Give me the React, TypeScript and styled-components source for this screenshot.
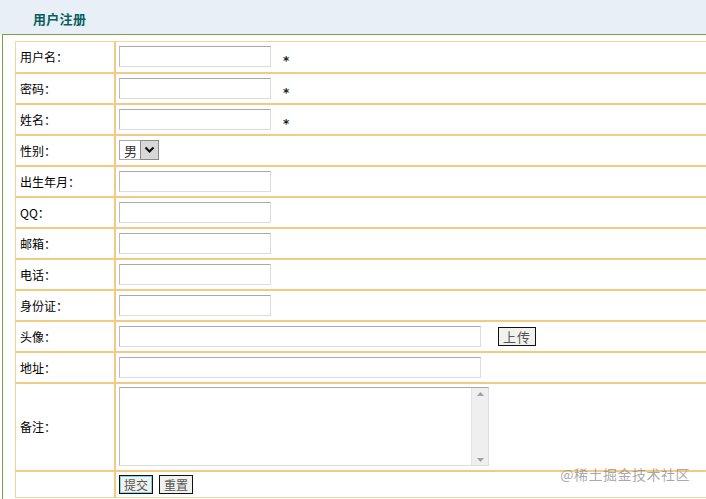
import React from 'react';
import styled, { createGlobalStyle } from 'styled-components';

const GlobalStyle = createGlobalStyle`
  html, body {
    margin: 0;
    padding: 0;
    background: #ffffff;
    overflow: hidden;
  }
  body {
    font-family: "Noto Sans CJK SC", "DejaVu Sans", sans-serif;
    font-size: 12px;
    color: #000;
  }
`;

const Page = styled.div`
  position: relative;
  width: 706px;
  height: 499px;
  overflow: hidden;
`;

const Header = styled.div`
  height: 34px;
  background: #e8eff7;
  display: flex;
  align-items: center;
  padding-left: 33px;
  box-sizing: border-box;
  padding-top: 2px;
`;

const Title = styled.h1`
  margin: 0;
  font-size: 13px;
  font-weight: bold;
  color: #0b5f5c;
  letter-spacing: 0.3px;
`;

const Panel = styled.div`
  margin-left: 2px;
  border-top: 1px solid #7d9f45;
  border-left: 1px solid #7d9f45;
  padding: 6px 0 0 12px;
  height: 470px;
`;

const FormTable = styled.table`
  width: 720px;
  border-collapse: collapse;
  border: 1px solid #f1d59c;
`;

const Row = styled.tr<{ h?: number }>`
  height: ${(p) => p.h ?? 31}px;
  border-bottom: 2px solid #f4c982;
  &:last-child {
    border-bottom: none;
  }
`;

const Label = styled.td`
  width: 94px;
  padding: 0 0 0 4px;
  border-right: 2px solid #f4c982;
  vertical-align: middle;
  font-size: 12px;
  white-space: nowrap;
`;

const Field = styled.td`
  padding: 0 0 0 3px;
  vertical-align: middle;
`;

const Line = styled.div`
  display: flex;
  align-items: center;
`;

const TextBox = styled.div<{ w?: number }>`
  box-sizing: border-box;
  width: ${(p) => p.w ?? 152}px;
  height: 21px;
  border: 1px solid #dcdcdc;
  border-top-color: #a9a9a9;
  border-left-color: #bcbcbc;
  background: #fff;
`;

const Star = styled.span`
  margin-left: 12px;
  margin-top: 9px;
  font-family: "DejaVu Sans", sans-serif;
  font-size: 12px;
  font-weight: bold;
  color: #222;
`;

const SelectBox = styled.div`
  display: flex;
  align-items: stretch;
  height: 20px;
  border: 1px solid #a5acb2;
  box-sizing: border-box;
`;

const SelectValue = styled.span`
  display: flex;
  align-items: center;
  padding: 0 3px 0 4px;
  font-size: 13px;
  color: #333;
  background: #fff;
`;

const SelectArrow = styled.span`
  width: 17px;
  display: flex;
  align-items: center;
  justify-content: center;
  background: #d8d8d8;
  border: 1px solid #8a8a8a;
  margin: -1px -1px -1px 0;
`;

const PlainButton = styled.button<{ focused?: boolean }>`
  box-sizing: border-box;
  height: 19px;
  padding: 0 4px;
  margin-right: 6px;
  font-family: "Noto Sans CJK SC", sans-serif;
  font-size: 12px;
  line-height: 15px;
  color: #555;
  background: #f1f1ee;
  border: 1px solid #111;
  box-shadow: ${(p) => (p.focused ? 'inset 0 0 0 1px #7fd6e8' : 'none')};
`;

const UploadButton = styled(PlainButton)`
  margin-left: 17px;
  font-size: 13px;
  letter-spacing: 1px;
`;

const Memo = styled.div`
  display: flex;
  box-sizing: border-box;
  width: 370px;
  height: 79px;
  border: 1px solid #dcdcdc;
  border-top-color: #a9a9a9;
  border-left-color: #bcbcbc;
  background: #fff;
`;

const MemoText = styled.div`
  flex: 1;
`;

const ScrollTrack = styled.div`
  width: 16px;
  background: #efefef;
  border-left: 1px solid #e2e2e2;
  display: flex;
  flex-direction: column;
  justify-content: space-between;
  align-items: center;
  padding: 4px 0 3px;
`;

const Watermark = styled.div`
  position: absolute;
  right: 16px;
  bottom: 15px;
  font-family: "Noto Sans CJK SC", sans-serif;
  font-size: 14px;
  color: rgba(140, 140, 140, 0.75);
  letter-spacing: 0.5px;
`;

const Chevron = () => (
  <svg width="11" height="8" viewBox="0 0 11 8">
    <path d="M1.5 1.5 L5.5 5.5 L9.5 1.5" fill="none" stroke="#111" strokeWidth="2.2" />
  </svg>
);

const Tri = ({ up }: { up?: boolean }) => (
  <svg width="7" height="4" viewBox="0 0 7 4">
    <path d={up ? 'M0 4 L3.5 0 L7 4 Z' : 'M0 0 L3.5 4 L7 0 Z'} fill="#a0a0a0" />
  </svg>
);

const simple = ['用户名：', '密码：', '姓名：'];

const plain = ['出生年月：', 'QQ：', '邮箱：', '电话：', '身份证：'];

export default function App() {
  return (
    <Page>
      <GlobalStyle />
      <Header>
        <Title>用户注册</Title>
      </Header>
      <Panel>
        <FormTable>
          <tbody>
            {simple.map((l) => (
              <Row key={l}>
                <Label>{l}</Label>
                <Field>
                  <Line>
                    <TextBox />
                    <Star>*</Star>
                  </Line>
                </Field>
              </Row>
            ))}
            <Row>
              <Label>性别：</Label>
              <Field>
                <Line>
                  <SelectBox>
                    <SelectValue>男</SelectValue>
                    <SelectArrow>
                      <Chevron />
                    </SelectArrow>
                  </SelectBox>
                </Line>
              </Field>
            </Row>
            {plain.map((l) => (
              <Row key={l}>
                <Label>{l}</Label>
                <Field>
                  <TextBox />
                </Field>
              </Row>
            ))}
            <Row>
              <Label>头像：</Label>
              <Field>
                <Line>
                  <TextBox w={362} />
                  <UploadButton>上传</UploadButton>
                </Line>
              </Field>
            </Row>
            <Row>
              <Label>地址：</Label>
              <Field>
                <TextBox w={362} />
              </Field>
            </Row>
            <Row h={88}>
              <Label>备注：</Label>
              <Field>
                <Memo>
                  <MemoText />
                  <ScrollTrack>
                    <Tri up />
                    <Tri />
                  </ScrollTrack>
                </Memo>
              </Field>
            </Row>
            <Row h={27}>
              <Label />
              <Field>
                <Line>
                  <PlainButton focused>提交</PlainButton>
                  <PlainButton>重置</PlainButton>
                </Line>
              </Field>
            </Row>
          </tbody>
        </FormTable>
      </Panel>
      <Watermark>@稀土掘金技术社区</Watermark>
    </Page>
  );
}
